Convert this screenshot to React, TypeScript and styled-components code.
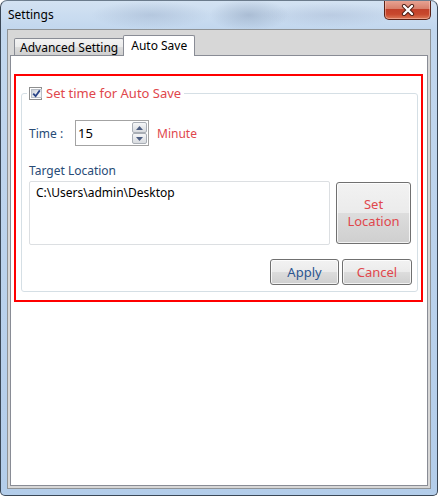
import React from "react";
import styled, { createGlobalStyle } from "styled-components";

const GlobalStyle = createGlobalStyle`
  html, body { margin: 0; padding: 0; background: #ffffff; }
  body { font-family: "Segoe UI", "Noto Sans", "Open Sans", sans-serif; font-size: 12px; }
  * { box-sizing: border-box; }
`;

const Window = styled.div`
  width: 438px;
  height: 496px;
  border: 1px solid #3a4756;
  border-top-color: #6b7b8c;
  border-radius: 7px 7px 5px 5px;
  background:
    radial-gradient(ellipse 60px 14px at 150px 14px, rgba(140,160,190,0.35), transparent),
    radial-gradient(ellipse 40px 16px at 248px 14px, rgba(110,130,160,0.35), transparent),
    radial-gradient(ellipse 70px 12px at 330px 14px, rgba(150,165,195,0.3), transparent),
    linear-gradient(180deg, #d3e2f2 0px, #c2d7ee 28px, #b3cdea 100%);
  display: flex;
  flex-direction: column;
  padding: 0 6px 6px 6px;
  overflow: hidden;
`;

const TitleBar = styled.div`
  height: 28px;
  display: flex;
  justify-content: space-between;
  align-items: flex-start;
  flex: none;
`;

const Title = styled.div`
  margin-top: 6px;
  padding-left: 1px;
  line-height: 16px;
  color: #000;
  font-size: 12px;
`;

const CloseButton = styled.div`
  width: 47px;
  height: 20px;
  margin-top: -1px;
  border: 1px solid #5b2216;
  border-top: none;
  border-radius: 0 0 5px 5px;
  background: linear-gradient(180deg, #e9a797 0%, #d8806c 45%, #c2412a 50%, #c8482d 75%, #dc7a58 100%);
  box-shadow: inset 0 0 0 1px rgba(255, 210, 200, 0.45);
  display: flex;
  align-items: center;
  justify-content: center;
`;

const Client = styled.div`
  flex: 1;
  border: 1px solid #8f9396;
  background: #d7d7d7;
  padding: 5px 2px 2px 2px;
  display: flex;
  flex-direction: column;
`;

const TabStrip = styled.div`
  display: flex;
  align-items: flex-end;
  height: 20px;
  padding-left: 4px;
  flex: none;
  position: relative;
  z-index: 1;
`;

const Tab = styled.div<{ $active?: boolean }>`
  border: 1px solid #898c95;
  border-bottom: none;
  border-radius: 2px 2px 0 0;
  color: #000;
  font-size: 12px;
  display: flex;
  align-items: center;
  justify-content: center;
  height: ${(p) => (p.$active ? "21px" : "17px")};
  margin-bottom: ${(p) => (p.$active ? "-1px" : "0")};
  margin-left: ${(p) => (p.$active ? "-1px" : "0")};
  padding: ${(p) => (p.$active ? "0 7px 2px 7px" : "0 5px 0 5px")};
  background: ${(p) =>
    p.$active
      ? "#ffffff"
      : "linear-gradient(180deg, #f3f3f3 0%, #ebebeb 50%, #dddddd 50%, #cfcfcf 100%)"};
`;

const Panel = styled.div`
  flex: 1;
  border: 1px solid #898c95;
  background: #ffffff;
  padding: 18px 4px 0 3px;
`;

const RedBox = styled.div`
  border: 2px solid #ff0000;
  padding: 10px 3px 8px 5px;
`;

const GroupBox = styled.fieldset`
  margin: 0;
  min-width: 0;
  border: 1px solid #d5dfe5;
  border-radius: 3px;
  padding: 20px 5px 6px 7px;
  display: flex;
  flex-direction: column;
`;

const Legend = styled.legend`
  padding: 0 3px 0 2px;
  margin-left: -2px;
  display: flex;
  align-items: center;
  gap: 4px;
  height: 14px;
  color: #e0474c;
  font-size: 13px;
  line-height: 14px;
`;

const CheckBox = styled.span`
  width: 13px;
  height: 13px;
  border: 1px solid #8e8f8f;
  background: #ffffff;
  padding: 1px;
  display: inline-flex;
  flex: none;
`;

const CheckInner = styled.span`
  flex: 1;
  background: linear-gradient(135deg, #cbd0d6 0%, #eef0f3 60%, #f7f7f7 100%);
  border: 1px solid #b8bec6;
  display: flex;
  align-items: center;
  justify-content: center;
`;

const TimeRow = styled.div`
  display: flex;
  align-items: center;
  height: 26px;
`;

const FieldLabel = styled.span<{ $width?: number }>`
  color: #284b76;
  font-size: 12px;
  width: ${(p) => (p.$width ? `${p.$width}px` : "auto")};
  flex: none;
`;

const NumericBox = styled.div`
  width: 74px;
  height: 26px;
  border: 1px solid #a3a3a3;
  background: #fff;
  display: flex;
  align-items: center;
  justify-content: space-between;
  padding: 0 1px 0 2px;
`;

const NumericValue = styled.span`
  color: #000;
  font-size: 13px;
`;

const Spinner = styled.div`
  display: flex;
  flex-direction: column;
  width: 15px;
  height: 22px;
`;

const SpinButton = styled.div`
  flex: 1;
  border: 1px solid #a9aeb5;
  border-radius: 2px;
  background: linear-gradient(180deg, #f6f7f8 0%, #e6e8eb 50%, #d9dce0 100%);
  display: flex;
  align-items: center;
  justify-content: center;
`;

const Unit = styled.span`
  margin-left: 8px;
  color: #e0474c;
  font-size: 12px;
`;

const SectionLabel = styled.div`
  margin-top: 17px;
  height: 16px;
  line-height: 16px;
  color: #284b76;
  font-size: 12px;
`;

const LocationRow = styled.div`
  margin-top: 2px;
  display: flex;
  align-items: center;
  gap: 6px;
`;

const PathBox = styled.div`
  width: 301px;
  height: 64px;
  border: 1px solid #dcdfe2;
  border-radius: 2px;
  padding: 3px 6px;
  color: #000;
  font-size: 12px;
  line-height: 16px;
`;

const Button = styled.button<{ $tone?: "red" | "blue"; $w: number; $h: number }>`
  width: ${(p) => p.$w}px;
  height: ${(p) => p.$h}px;
  border: 1px solid #707070;
  border-radius: 3px;
  background: linear-gradient(180deg, #f2f2f2 0%, #ebebeb 50%, #dddddd 50%, #cfcfcf 100%);
  box-shadow: inset 0 0 0 1px rgba(255, 255, 255, 0.75);
  color: ${(p) => (p.$tone === "blue" ? "#2b5590" : "#e0474c")};
  font-family: inherit;
  font-size: 13px;
  line-height: 17px;
  padding: 0;
  flex: none;
  cursor: default;
`;

const ButtonRow = styled.div`
  margin-top: 14px;
  display: flex;
  justify-content: flex-end;
  gap: 3px;
`;

const CloseIcon = () => (
  <svg width="14" height="12" viewBox="0 0 14 12">
    <path d="M3 2 L11 10 M11 2 L3 10" stroke="#4a1d14" strokeWidth="4.2" strokeLinecap="round" />
    <path d="M3 2 L11 10 M11 2 L3 10" stroke="#ffffff" strokeWidth="2.4" strokeLinecap="round" />
  </svg>
);

const CheckMark = () => (
  <svg width="9" height="9" viewBox="0 0 9 9">
    <path d="M1.2 4.6 L3.6 7.2 L7.8 1.4" stroke="#2b4689" strokeWidth="1.8" fill="none" />
  </svg>
);

const Arrow = ({ up }: { up?: boolean }) => (
  <svg width="7" height="4" viewBox="0 0 7 4">
    <path d={up ? "M0 4 L3.5 0 L7 4 Z" : "M0 0 L3.5 4 L7 0 Z"} fill="#4d5e82" />
  </svg>
);

export default function App() {
  return (
    <>
      <GlobalStyle />
      <Window>
        <TitleBar>
          <Title>Settings</Title>
          <CloseButton>
            <CloseIcon />
          </CloseButton>
        </TitleBar>
        <Client>
          <TabStrip>
            <Tab>Advanced Setting</Tab>
            <Tab $active>Auto Save</Tab>
          </TabStrip>
          <Panel>
            <RedBox>
              <GroupBox>
                <Legend>
                  <CheckBox>
                    <CheckInner>
                      <CheckMark />
                    </CheckInner>
                  </CheckBox>
                  Set time for Auto Save
                </Legend>
                <TimeRow>
                  <FieldLabel $width={46}>Time :</FieldLabel>
                  <NumericBox>
                    <NumericValue>15</NumericValue>
                    <Spinner>
                      <SpinButton>
                        <Arrow up />
                      </SpinButton>
                      <SpinButton>
                        <Arrow />
                      </SpinButton>
                    </Spinner>
                  </NumericBox>
                  <Unit>Minute</Unit>
                </TimeRow>
                <SectionLabel>Target Location</SectionLabel>
                <LocationRow>
                  <PathBox>C:\Users\admin\Desktop</PathBox>
                  <Button $w={75} $h={62}>
                    Set
                    <br />
                    Location
                  </Button>
                </LocationRow>
                <ButtonRow>
                  <Button $tone="blue" $w={69} $h={26}>
                    Apply
                  </Button>
                  <Button $w={70} $h={26}>
                    Cancel
                  </Button>
                </ButtonRow>
              </GroupBox>
            </RedBox>
          </Panel>
        </Client>
      </Window>
    </>
  );
}
